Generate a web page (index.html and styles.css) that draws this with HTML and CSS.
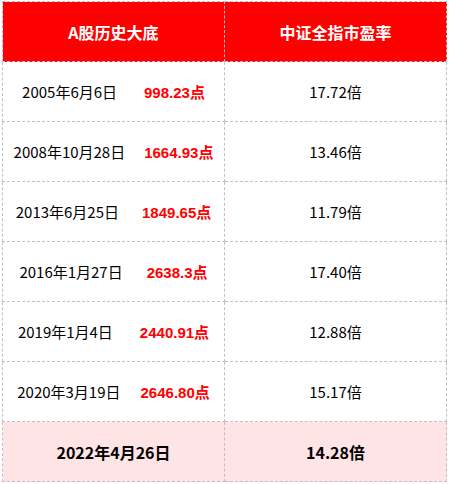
FILE: index.html
```html
<!DOCTYPE html>
<html>
<head>
<meta charset="utf-8">
<link rel="stylesheet" href="styles.css">
</head>
<body>
<table class="pe-table">
  <thead>
    <tr>
      <th class="col">A股历史大底</th>
      <th class="col">中证全指市盈率</th>
    </tr>
  </thead>
  <tbody>
    <tr>
      <td><span class="date">2005年6月6日</span><span class="pts g27">998.23点</span></td>
      <td class="pe">17.72倍</td>
    </tr>
    <tr>
      <td><span class="date">2008年10月28日</span><span class="pts g19">1664.93点</span></td>
      <td class="pe">13.46倍</td>
    </tr>
    <tr>
      <td><span class="date">2013年6月25日</span><span class="pts g23">1849.65点</span></td>
      <td class="pe">11.79倍</td>
    </tr>
    <tr>
      <td><span class="date">2016年1月27日</span><span class="pts g24">2638.3点</span></td>
      <td class="pe">17.40倍</td>
    </tr>
    <tr>
      <td><span class="date">2019年1月4日</span><span class="pts g27">2440.91点</span></td>
      <td class="pe">12.88倍</td>
    </tr>
    <tr>
      <td><span class="date">2020年3月19日</span><span class="pts g20">2646.80点</span></td>
      <td class="pe">15.17倍</td>
    </tr>
    <tr class="now">
      <td>2022年4月26日</td>
      <td>14.28倍</td>
    </tr>
  </tbody>
</table>
</body>
</html>
```
FILE: styles.css
```css
html, body {
  margin: 0;
  padding: 0;
  background: #ffffff;
}

.pe-table {
  border-collapse: collapse;
  margin: 1px 0 0 2px;
  width: 445px;
  table-layout: fixed;
  font-family: "Noto Sans CJK SC", sans-serif;
  font-size: 15px;
  color: #000;
}

.pe-table th,
.pe-table td {
  border: 1px dashed #c0c0c0;
  height: 59px;
  padding: 0;
  text-align: center;
  vertical-align: middle;
  white-space: nowrap;
}

.pe-table th {
  background: #ff0000;
  color: #ffffff;
  font-size: 16px;
  font-weight: bold;
}

.pts {
  color: #ff0000;
  font-family: "Liberation Sans", "Noto Sans CJK SC", sans-serif;
  font-weight: bold;
  font-size: 15px;
}

.g19 { margin-left: 19px; }
.g20 { margin-left: 20px; }
.g23 { margin-left: 23px; }
.g24 { margin-left: 24px; }
.g27 { margin-left: 27px; }

.now td {
  background: #ffe4e6;
  font-weight: bold;
  font-size: 16px;
}
```
